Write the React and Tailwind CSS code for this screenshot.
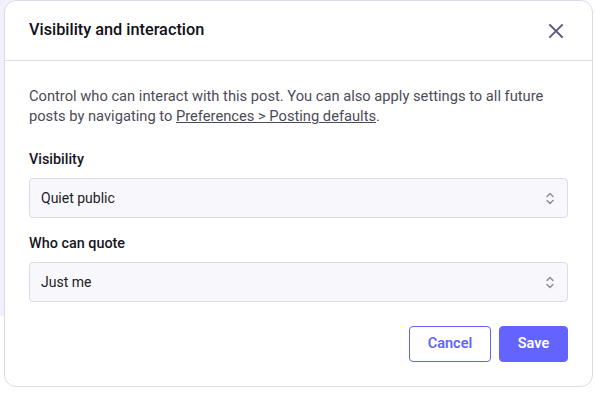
import React, { useState } from 'react';

const font = { fontFamily: 'Roboto, "Liberation Sans", sans-serif' };

const Chevrons = () => (
  <svg width="8" height="13" viewBox="0 0 8 13" fill="none" stroke="#8a8a96" strokeWidth="1.4" strokeLinecap="round" strokeLinejoin="round">
    <path d="M1 4.5 L4 1.5 L7 4.5" />
    <path d="M1 8.5 L4 11.5 L7 8.5" />
  </svg>
);

const SelectBox = ({ value, options, onChange }) => (
  <div className="relative h-10 w-full">
    <select
      value={value}
      onChange={(e) => onChange(e.target.value)}
      className="h-10 w-full appearance-none rounded border border-[#dcdaea] bg-[#f8f8fc] pl-[11px] pr-8 text-sm text-[#1c1c24] outline-none"
    >
      {options.map((o) => (
        <option key={o}>{o}</option>
      ))}
    </select>
    <span className="pointer-events-none absolute right-[14px] top-[14px]">
      <Chevrons />
    </span>
  </div>
);

const App = () => {
  const [visibility, setVisibility] = useState('Quiet public');
  const [quote, setQuote] = useState('Just me');

  return (
    <div className="relative h-[393px] w-[595px] overflow-hidden bg-white" style={font}>
      <div className="absolute left-0 top-0 h-[316px] w-[12px] bg-[#f2f1fb]" />

      <div className="relative ml-[4px] flex h-[387px] w-[589px] flex-col rounded-[12px] border border-[#dcdaea] bg-white">
        <div className="flex h-[60px] items-center justify-between border-b border-[#dcdaea] pl-6 pr-[28px]">
          <h2 className="text-[16.3px] font-medium text-[#101018]">Visibility and interaction</h2>
          <button className="flex items-center justify-center">
            <svg width="16" height="16" viewBox="0 0 16 16" stroke="#5b5a80" strokeWidth="1.9" strokeLinecap="square">
              <path d="M2 2 L14 14 M14 2 L2 14" />
            </svg>
          </button>
        </div>

        <div className="flex flex-col px-6 pt-[25px]">
          <p className="text-[14.7px] leading-5 text-[#4b4b58]">
            Control who can interact with this post. You can also apply settings to all future
            posts by navigating to <a className="underline">Preferences &gt; Posting defaults</a>.
          </p>

          <label className="mt-6 mb-2 text-[14.4px] font-medium leading-5 text-[#16161e]">Visibility</label>
          <SelectBox
            value={visibility}
            onChange={setVisibility}
            options={['Public', 'Quiet public', 'Followers', 'Specific people']}
          />

          <label className="mt-4 mb-2 text-[14.4px] font-medium leading-5 text-[#16161e]">Who can quote</label>
          <SelectBox value={quote} onChange={setQuote} options={['Anyone', 'Followers', 'Just me']} />

          <div className="mt-6 flex justify-end gap-2">
            <button className="h-9 w-[82px] rounded border border-[#6364ff] bg-white text-[14.5px] font-semibold text-[#6364ff]">
              Cancel
            </button>
            <button className="h-9 w-[69px] rounded border border-[#6364ff] bg-[#6364ff] text-[14.5px] font-semibold text-white">
              Save
            </button>
          </div>
        </div>
      </div>
    </div>
  );
};

export default App;
